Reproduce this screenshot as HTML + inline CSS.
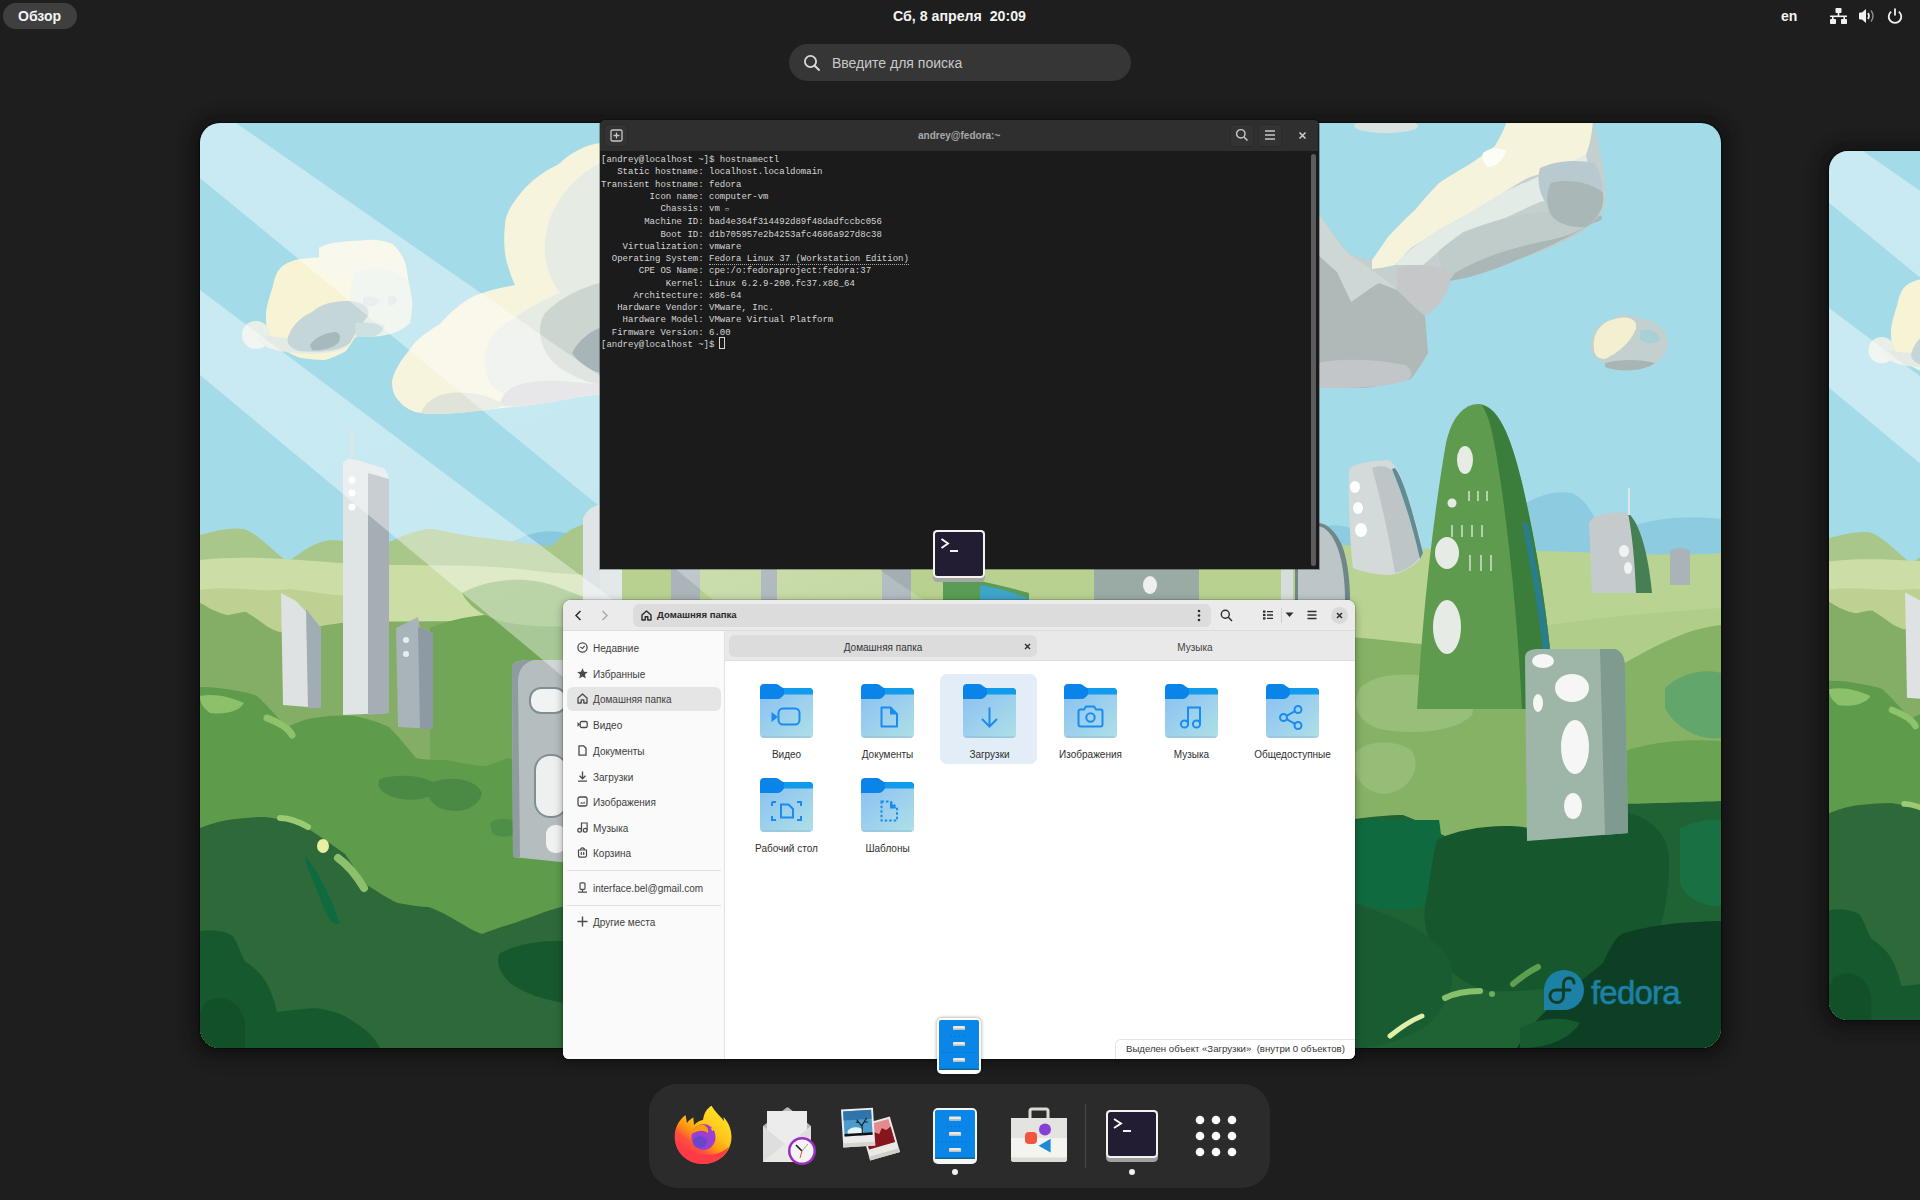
<!DOCTYPE html>
<html><head><meta charset="utf-8">
<style>
*{margin:0;padding:0;box-sizing:border-box}
html,body{width:1920px;height:1200px;overflow:hidden;background:#1e1e1e;font-family:"Liberation Sans",sans-serif;color:#fff}
.abs{position:absolute}
svg{display:block}
#pill{left:3px;top:3px;width:74px;height:26px;border-radius:13px;background:#3f3f3f}
.ttxt{font-weight:bold;font-size:14px;color:#f4f4f4;white-space:nowrap;line-height:16px}
#search{left:789px;top:44px;width:342px;height:37px;border-radius:19px;background:#363636}
#ws{left:200px;top:123px;width:1521px;height:925px;border-radius:20px;overflow:hidden;box-shadow:0 0 0 1px #0c0c0c,0 2px 2px 3px rgba(0,0,0,.15),0 1px 3px 10px rgba(0,0,0,.1),0 2px 6px 20px rgba(0,0,0,.1)}
#ws2{left:1829px;top:151px;width:1429px;height:869px;border-radius:19px;overflow:hidden;box-shadow:0 0 0 1px #0c0c0c,0 2px 2px 3px rgba(0,0,0,.15),0 1px 3px 10px rgba(0,0,0,.1),0 2px 6px 20px rgba(0,0,0,.1)}
#term{left:600px;top:120px;width:719px;height:449px;background:#1b1b1b;border-radius:5px 5px 0 0;overflow:hidden;box-shadow:0 0 0 1px rgba(0,0,0,.3)}
#termhdr{left:0;top:0;width:718px;height:31px;background:#2f2f2f}
.tbtn{top:4px;width:24px;height:23px;border-radius:5px;background:#333;box-shadow:inset 0 0 0 1px #2a2a2a}
#termtxt{left:1px;top:34px;font-family:"Liberation Mono",monospace;font-size:9px;line-height:12.27px;color:#d6d6d6;white-space:pre}
#fm{left:563px;top:600px;width:792px;height:459px;background:#fff;border-radius:8px 8px 6px 6px;overflow:hidden;box-shadow:0 0 0 1px rgba(0,0,0,.12),0 2px 8px rgba(0,0,0,.35)}
#fmhdr{left:0;top:0;width:792px;height:31px;background:#ebebeb;border-bottom:1px solid #dcdcdc}
#side{left:0;top:31px;width:162px;height:428px;background:#fafafa;border-right:1px solid #e2e2e2}
.si{left:14px;height:16px;font-size:10px;line-height:16px;color:#404040;white-space:nowrap}
.si svg{position:absolute;left:0;top:3px}
.si span{position:absolute;left:16px;top:1.5px}
#tabs{left:162px;top:31px;width:630px;height:30px;background:#e9e9e9;border-bottom:1px solid #dedede}
.lbl{font-size:10px;color:#2f2f2f;text-align:center;width:100px;white-space:nowrap;line-height:12px}
.fold{width:53px;height:54px}
#dock{left:649px;top:1084px;width:621px;height:104px;border-radius:28px;background:#2b2b2b}
</style></head><body>
<svg width="0" height="0" style="position:absolute">
<defs>
<linearGradient id="rayfade" x1="0" y1="0" x2="0.45" y2="1">
  <stop offset="0" stop-color="#fff" stop-opacity="0.42"/>
  <stop offset="0.55" stop-color="#fff" stop-opacity="0.38"/>
  <stop offset="0.85" stop-color="#fff" stop-opacity="0.12"/>
  <stop offset="1" stop-color="#fff" stop-opacity="0"/>
</linearGradient>
<symbol id="wp" viewBox="0 0 1521 925" preserveAspectRatio="none">
  <!-- sky -->
  <rect width="1521" height="925" fill="#a3dbe9"/>
  <!-- clouds: left small -->
  <g>
    <path d="M72.5 164.5 C75 152 78 147 82.5 143 C88 139 94 137 100 136 C108 135 114 135 120 134.5 C120 128 121 126 121 124.5 C126 121 131 120 136 119.5 C143 120 149 121 155 121 C160 119 164 117 167.5 117 C176 116 185 118 192.5 121 C199 127 203 133 205 139.5 C207 147 208 155 209 162 C211 169 212 176 212.5 183 C210 189 207 194 202.5 197 C197 199 191 201 185 202 C183 206 181 209 180 212 C174 213 167 213 161 213 C159 214 157 214 155 214.5 C152 219 149 224 146 228 C139 232 132 235 125 237 C116 237 107 236 99 234.5 C93 232 87 229 82.5 226 C77 221 71 215 67.5 209.5 C66 203 66 196 66 189.5 C67 181 70 172 72.5 164.5Z" fill="#f7f4d6"/>
    <path d="M119 124.5 C130 119 150 118 167.5 117 C185 118 198 126 205 139.5 C207 147 207 152 206 154 C190 150 170 148 150 150 C140 152 125 150 119 140Z" fill="#f4f3e2"/>
    <path d="M155 150 C170 143 195 143 209 160 C212 176 213 190 210 200 C200 210 185 214 165 214 C158 205 152 190 150 175 C150 165 152 156 155 150Z" fill="#e8f0e8"/>
    <path d="M163 175 C170 172 178 174 180 179 C176 184 168 185 163 181Z M188 175 C193 171 197 173 197 178 C195 183 190 184 188 180Z" fill="#dde3e8"/>
    <circle cx="56" cy="212" r="14" fill="#e7efe8"/>
    <path d="M56 212 C80 214 120 218 149 222 C140 230 120 232 95 230 C75 228 60 225 56 212Z" fill="#e3ebe4"/>
    <path d="M87.5 216 C90 205 100 194 112 189 C125 178 145 176 160 180 C168 183 170 188 168 193 C162 200 156 210 150 220 C140 228 120 230 100 228 C92 226 87 222 87.5 216Z" fill="#c5d6d8"/>
    <path d="M110 222 C115 214 125 210 135 209 C141 210 141 216 138 220 C132 226 120 228 112 227Z" fill="#a6b9bc"/>
    <path d="M155 200 C170 198 180 202 185 202 C183 208 180 212 170 214 L156 214Z" fill="#cde0e2"/>
  </g>
  <!-- big left cloud (behind terminal) -->
  <g>
    <path d="M400 20 C385 22 370 30 359 41 C340 50 330 60 325 65 C312 80 305 92 305 102 C303 120 305 135 308 143 C310 150 313 158 315 162 C300 165 285 168 272 174 C258 182 248 192 240 201 C225 210 215 218 211 225 C200 238 193 250 192 259 C192 268 195 274 199 278 C205 285 212 289 221 290 C240 292 260 290 277 288 C295 286 310 284 325 283 C350 280 375 274 400 271 L700 300 L1118 264 L1118 92 L700 40Z" fill="#f6f4dd"/>
    <path d="M400 40 C380 50 360 70 350 95 C340 125 345 150 360 170 C340 178 320 190 300 205 C285 218 280 240 290 260 C300 275 330 280 360 276 L400 271Z" fill="#e6ece4"/>
    <path d="M400 160 C380 165 360 175 345 190 C335 205 340 230 360 245 C375 255 390 260 400 262Z" fill="#ccd5cf"/>
    <path d="M400 205 C390 208 378 218 372 230 C380 242 392 248 400 250Z" fill="#a8b5b8"/>
    <path d="M318 262 C340 255 370 258 400 262 L400 271 C375 274 350 280 325 283 C310 284 300 284 300 280 C302 272 308 266 318 262Z" fill="#d8d7dc"/>
    <path d="M221 290 C240 292 260 290 277 288 C290 287 300 285 305 282 C290 272 270 268 250 270 C235 272 225 280 221 290Z" fill="#dfe3d8"/>
  </g>
  <!-- right cloud -->
  <g>
    <path d="M1118 90 C1123 97 1128 104 1132 109 C1138 116 1143 124 1148 130 C1156 134 1164 136 1172 137 C1178 129 1183 121 1188 114 C1197 104 1206 95 1216 86 C1223 77 1231 68 1239 60 C1249 53 1260 47 1270 41 C1279 35 1287 29 1295 23 C1299 16 1303 9 1307 -2 L1393 -2 C1397 13 1400 28 1403 44 C1405 57 1406 70 1405 83 C1402 90 1398 95 1393 100 C1380 108 1366 116 1351 123 C1336 130 1320 136 1305 142 C1297 145 1289 148 1281 151 C1270 153 1259 156 1249 158 C1240 170 1232 181 1225 193 C1226 205 1227 218 1228 230 C1223 239 1217 248 1211 256 C1195 260 1180 263 1165 265 L1118 265Z" fill="#c5cfce"/>
    <path d="M1172 137 C1178 129 1183 121 1188 114 C1197 104 1206 95 1216 86 C1223 77 1231 68 1239 60 C1249 53 1260 47 1270 41 C1279 35 1287 29 1295 23 C1299 16 1303 9 1307 -2 L1393 -2 C1392 10 1390 22 1386 32 C1375 38 1363 43 1351 48 C1343 50 1335 52 1328 55 C1318 60 1309 66 1300 72 C1290 78 1280 84 1270 90 C1260 96 1249 101 1239 107 C1230 113 1220 119 1211 125 C1205 131 1200 137 1195 142 C1187 144 1180 145 1172 146Z" fill="#f6f3dc"/>
    <path d="M1283 30 C1290 24 1300 24 1306 28 C1303 38 1295 44 1288 44 C1283 40 1281 35 1283 30Z" fill="#fdfdf8"/>
    <path d="M1195 142 C1205 130 1220 118 1239 107 C1260 96 1285 80 1310 66 C1335 55 1360 45 1386 32 C1390 45 1387 58 1379 67 C1366 72 1353 76 1340 79 C1328 84 1316 90 1305 95 C1290 99 1276 104 1263 109 C1255 115 1247 121 1239 128 C1233 133 1228 138 1223 142Z" fill="#e3ebe6"/>
    <path d="M1340 45 C1355 38 1375 36 1395 40 C1403 55 1405 72 1400 88 C1385 95 1365 92 1350 85 C1340 75 1336 58 1340 45Z" fill="#b8cad0"/>
    <path d="M1239 128 C1255 112 1285 100 1320 92 C1350 86 1375 88 1393 100 C1375 115 1350 126 1320 136 C1295 145 1270 152 1249 158 C1242 148 1238 138 1239 128Z" fill="#c0ccca"/>
    <path d="M1255 150 C1280 135 1310 125 1345 118 C1365 114 1385 108 1400 92 C1404 95 1402 98 1393 100 C1370 114 1340 128 1305 142 C1285 150 1265 156 1249 158Z" fill="#aab7b6"/>
    <path d="M1351 60 C1370 55 1392 60 1403 70 C1405 85 1398 96 1385 104 C1370 105 1355 100 1350 90 C1346 80 1346 70 1351 60Z" fill="#a9b7b7"/>
    <path d="M1118 90 C1128 104 1140 122 1148 130 C1160 140 1180 150 1197 167 C1180 175 1160 180 1151 179 C1140 165 1130 150 1118 132Z" fill="#cfd7d6"/>
    <path d="M1118 132 C1125 138 1131 144 1137 149 C1142 160 1147 170 1151 179 C1160 173 1170 165 1179 160 C1185 162 1191 165 1197 167 C1207 175 1217 184 1225 193 C1226 205 1227 218 1228 230 C1223 239 1217 248 1211 256 C1195 260 1180 263 1165 265 L1118 265Z" fill="#aeb9b8"/>
    <path d="M1197 146 C1210 140 1235 140 1251 150 C1250 165 1245 180 1225 193 C1215 185 1205 175 1197 167Z" fill="#c5c7c9"/>
    <path d="M1118 240 C1140 235 1175 236 1205 242 C1215 248 1212 256 1205 258 C1190 262 1170 264 1150 265 L1118 265Z" fill="#c3c6c8"/>
  </g>
  <!-- small right cloud -->
  <path d="M1391 228 C1388 212 1398 200 1410 198 C1418 190 1432 190 1440 196 C1452 195 1466 205 1468 218 C1468 232 1458 242 1445 244 C1430 250 1405 250 1391 228Z" fill="#c4d0cf"/>
  <path d="M1394 226 C1392 210 1402 198 1415 196 C1428 192 1438 196 1436 206 C1430 220 1418 230 1405 236 C1398 236 1394 232 1394 226Z" fill="#f3f0d2"/>
  <path d="M1440 208 C1448 204 1458 208 1460 216 C1455 222 1445 222 1440 216Z" fill="#a9d0d6"/>
  <path d="M1405 240 C1420 236 1440 236 1455 240 C1445 248 1420 250 1405 244Z" fill="#a9b5b5"/>
  <ellipse cx="1186" cy="3" rx="32" ry="7" fill="#d9e2de"/>
  <!-- distant blue hills -->
  <path d="M1100 420 C1110 405 1130 398 1150 405 C1165 410 1170 420 1172 430 L1100 430Z" fill="#8ccbe0"/><path d="M1300 410 C1315 380 1345 366 1372 370 C1388 378 1396 395 1400 410 L1400 440 L1300 440Z" fill="#8ccbe0"/><path d="M1420 408 C1450 394 1490 392 1521 396 L1521 440 L1420 440Z" fill="#8ccbe0"/>
  <path d="M310 420 C330 408 355 405 370 412 L380 430 L310 430Z" fill="#88c9e0"/>
  <!-- hills left -->
  <path d="M0 412 C15 408 30 404 44 406 C60 412 75 430 88 439 C100 430 115 418 132 417 C150 418 170 420 189 419 C205 412 220 405 233 406 C255 410 270 414 286 415 C310 418 330 422 352 423 C360 415 366 410 372 406 C385 400 392 398 400 397 L400 925 L0 925Z" fill="#a9c78a"/>
  <path d="M0 437 C40 432 90 436 140 440 C200 444 260 440 320 446 C350 450 380 452 400 452 L400 925 L0 925Z" fill="#cbdea5"/>
  <path d="M0 467 C30 462 60 470 90 466 C120 470 150 475 180 474 L180 925 L0 925Z" fill="#bdd292"/>
  <path d="M0 480 C5 482 10 486 13 487 C20 490 25 492 29 492 C35 491 40 489 46 489 C55 494 62 500 68 504 C72 506 76 508 79 509 C100 508 130 500 160 498 C200 500 250 496 300 500 C340 505 370 505 400 505 L400 925 L0 925Z" fill="#84ad66"/>
  <path d="M230 505 C260 492 300 488 340 494 C370 498 390 500 400 500 L400 670 L230 670Z" fill="#72a657"/>
  <path d="M262 470 C290 455 330 452 360 465 L400 480 L400 500 C370 505 330 505 300 498 C280 492 268 482 262 470Z" fill="#8fb870"/>
  <!-- region D strip (between windows) -->
  <path d="M400 446 L1118 446 L1118 480 L400 480Z" fill="#b8d190"/>
  <path d="M743 452 C770 455 800 462 829 470 L829 480 L743 480Z" fill="#5a9c55"/>
  <path d="M780 462 C800 465 815 470 829 476 L829 480 L780 480Z" fill="#3fa4c9"/>
  <rect x="390" y="440" width="32" height="40" rx="4" fill="#e3e8e8"/>
  <rect x="471" y="446" width="29" height="34" fill="#aab4b9"/>
  <rect x="561" y="446" width="16" height="34" fill="#9aa6ad"/>
  <rect x="682" y="446" width="29" height="34" fill="#a3aeb3"/>
  <rect x="894" y="446" width="105" height="34" fill="#9aaba5"/>
  <ellipse cx="950" cy="462" rx="7" ry="9" fill="#eef0ef"/>
  <rect x="1081" y="446" width="12" height="34" fill="#d7dcdc"/>
  <!-- right side light -->
  <path d="M1118 420 C1200 428 1300 425 1400 430 C1450 432 1500 432 1521 430 L1521 925 L1118 925Z" fill="#b9d492"/>
  <path d="M1318 508 C1380 495 1450 490 1521 485 L1521 520 C1470 540 1430 555 1400 560 C1370 545 1340 530 1318 520Z" fill="#b1cd8a"/><path d="M1465 545 C1485 530 1505 518 1521 510 L1521 516 C1505 525 1488 537 1470 549Z" fill="#d8e6a8"/>
  <path d="M1118 514 C1160 512 1200 520 1245 523 C1300 530 1350 535 1425 540 C1460 520 1490 505 1521 502 L1521 925 L1118 925Z" fill="#86b266"/>
  <path d="M1160 565 C1175 550 1210 548 1240 556 C1265 560 1278 575 1272 592 C1255 610 1210 612 1180 606 C1160 600 1150 585 1160 565Z" fill="#98bf7a"/>
  <path d="M1155 630 C1165 618 1195 615 1212 628 C1222 645 1210 668 1185 671 C1165 670 1150 655 1155 630Z" fill="#96bd78"/>
  <path d="M1465 565 C1480 550 1505 545 1521 550 L1521 615 C1500 618 1475 605 1465 585Z" fill="#62a66c"/><path d="M1400 640 C1430 620 1480 615 1521 618 L1521 680 L1425 681 C1410 670 1402 655 1400 640Z" fill="#6aa352"/>
  <!-- bush hills left -->
  <path d="M0 564 C10 564 20 565 26 566 C40 568 50 570 57 573 C70 585 80 598 88 604 C95 600 105 596 114 595 C130 592 145 592 154 593 C170 596 180 600 189 604 C200 615 210 628 216 635 C225 637 235 637 246 637 C260 640 275 643 286 643 C295 640 302 637 308 635 C330 640 370 645 400 650 L400 925 L0 925Z" fill="#5e9c4b"/>
  <path d="M0 573 C15 570 30 574 44 580 C40 588 25 592 10 590 C5 586 0 582 0 573Z" fill="#8cc06a"/>
  <path d="M180 656 C200 650 230 652 240 665 C232 678 205 680 188 672 C180 668 176 662 180 656Z" fill="#4a8a45"/>
  <path d="M230 660 C250 652 275 655 282 670 C278 688 255 692 238 684 C228 678 224 668 230 660Z" fill="#4a8a45"/>
  <path d="M290 700 C300 693 315 695 320 705 C315 715 300 716 292 710Z" fill="#4e8f48"/>
  <!-- dark foliage left -->
  <path d="M0 705 C12 700 24 697 35 696 C45 695 55 694 66 694 C80 696 92 699 101 701 C115 710 130 720 145 731 C155 745 160 755 167 762 C180 770 190 777 198 780 C210 782 220 784 229 784 C245 790 255 797 264 802 C270 806 276 809 282 811 C290 808 300 804 308 802 C330 795 345 788 361 784 C380 786 390 788 400 789 L400 925 L0 925Z" fill="#2e6a39"/>
  <path d="M0 808 C12 806 25 808 33 813 C40 825 42 835 46 839 C55 845 62 852 66 859 C72 870 75 880 77 889 C85 888 100 886 115 885 C130 887 140 890 148 895 C160 902 170 910 175 917 L180 925 L0 925Z" fill="#17592f"/>
  <path d="M5 880 C20 870 40 875 45 900 L45 925 L0 925 L0 890Z" fill="#12502a"/><path d="M105 732 C115 745 130 770 140 800 C132 805 125 790 118 770 C112 755 105 742 105 732Z" fill="#0f6a40"/>
  <path d="M300 830 C330 815 370 815 400 825 L400 880 C370 885 330 875 310 860 C300 850 295 840 300 830Z" fill="#17592f"/>
  <!-- dark foliage right -->
  <path d="M1118 700 C1130 697 1145 696 1155 696 C1170 694 1190 692 1203 692 C1220 698 1235 708 1245 713 C1260 710 1275 706 1287 705 C1300 708 1315 712 1325 713 C1360 705 1400 688 1422 681 C1460 680 1500 679 1521 678 L1521 925 L1118 925Z" fill="#1f6234"/>
  <path d="M1155 697 L1239 697 C1245 730 1240 760 1225 783 C1200 790 1170 785 1155 780Z" fill="#106a3f"/>
  <path d="M1237 717 C1260 705 1300 700 1330 705 L1430 690 C1460 700 1470 720 1469 740 C1469 780 1460 820 1440 840 C1400 860 1340 870 1290 868 C1250 860 1220 820 1225 783 C1230 760 1232 735 1237 717Z" fill="#16572d"/>
  <path d="M1480 705 C1495 698 1510 696 1521 697 L1521 783 C1505 785 1485 775 1480 760Z" fill="#187043"/>
  <path d="M1155 780 C1180 790 1220 800 1245 830 C1260 850 1250 880 1230 900 C1210 915 1180 925 1155 925Z" fill="#1a5c31"/>
  <path d="M1403 840 C1410 825 1415 815 1422 811 C1440 805 1460 802 1479 800 C1495 799 1510 798 1521 798 L1521 925 L1317 925 C1325 910 1335 898 1346 888 C1365 870 1385 855 1403 840Z" fill="#0c3f24"/>
  <path d="M1320 905 C1340 895 1360 893 1380 900 C1370 915 1350 925 1320 925Z" fill="#185a30"/>
  <!-- bright highlight strokes -->
  <path d="M67 595 C75 598 88 604 92 612" stroke="#8fc36b" stroke-width="7" fill="none" stroke-linecap="round"/>
  <path d="M80 695 C88 695 100 699 108 704" stroke="#9bca73" stroke-width="6" fill="none" stroke-linecap="round"/>
  <ellipse cx="123" cy="723" rx="6" ry="7" fill="#e9eea0"/>
  <path d="M138 735 C148 742 158 755 164 765" stroke="#8cc06a" stroke-width="8" fill="none" stroke-linecap="round"/>
  <path d="M1313 861 C1320 855 1330 848 1338 844" stroke="#5f9e4e" stroke-width="6" fill="none" stroke-linecap="round"/>
  <path d="M1245 875 C1255 870 1268 868 1280 868" stroke="#86c06a" stroke-width="6" fill="none" stroke-linecap="round"/>
  <circle cx="1292" cy="871" r="3" fill="#6fae5c"/>
  <path d="M1190 913 C1200 905 1212 897 1222 893" stroke="#e0efa8" stroke-width="5" fill="none" stroke-linecap="round"/>
  <!-- buildings left -->
  <path d="M152 306 L152 340" stroke="#c9d1d3" stroke-width="2.5"/>
  <path d="M143 342 C143 336 150 335 160 338 L183 345 C188 348 189 355 189 360 L189 590 L143 592Z" fill="#dfe4e4"/>
  <path d="M168 350 L189 356 L189 590 L168 592Z" fill="#a5aeb5"/>
  <circle cx="152" cy="357" r="3.5" fill="#fff"/><circle cx="152" cy="370" r="3.5" fill="#fff"/><circle cx="152" cy="384" r="3.5" fill="#fff"/>
  <path d="M81 470 L96 478 L121 505 L121 585 L83 582Z" fill="#dfe2e2"/>
  <path d="M106 486 L121 505 L121 585 L108 585Z" fill="#a2acb3"/>
  <path d="M196 505 L218 494 L220 505 L233 510 L233 606 L198 604Z" fill="#a9b3ba"/>
  <path d="M218 504 L233 510 L233 606 L220 606Z" fill="#8e9aa3"/>
  <circle cx="206" cy="517" r="3" fill="#e6eef0"/><circle cx="206" cy="531" r="3" fill="#e6eef0"/>
  <path d="M312 545 C312 539 318 537 332 537 L370 537 L370 740 L313 734Z" fill="#b5bdbf"/>
  <path d="M312 545 C312 539 318 537 332 537 L334 537 C322 540 318 548 318 560 L320 734 L313 734Z" fill="#8e9ca0"/>
  <rect x="329" y="564" width="38" height="27" rx="12" fill="#7f8f93"/>
  <rect x="331" y="566" width="34" height="23" rx="10" fill="#f1f2f2"/>
  <rect x="334" y="631" width="34" height="64" rx="16" fill="#7f8f93"/>
  <rect x="336" y="633" width="30" height="60" rx="14" fill="#eef0f0"/>
  <rect x="346" y="702" width="20" height="28" rx="9" fill="#f0f1f1"/>
  <path d="M383 395 C388 385 395 382 400 382 L400 477 L383 477Z" fill="#dfe5e6"/>
  <!-- buildings right -->
  <path d="M1095 430 C1100 410 1110 400 1118 400 C1128 400 1137 410 1143 425 C1148 440 1150 460 1150 477 L1095 477Z" fill="#6f8789"/><path d="M1098 432 C1103 413 1111 403 1118 403 C1126 404 1133 412 1138 426 C1143 440 1145 460 1145 477 L1098 477Z" fill="#bcc6c8"/>
  <path d="M1149 348 C1150 342 1160 339 1188 337 C1195 340 1200 350 1205 365 C1212 385 1220 410 1223 430 C1220 440 1205 450 1190 452 C1175 452 1160 448 1153 445 C1150 420 1148 380 1149 348Z" fill="#d4d9d9"/>
  <path d="M1172 345 C1185 340 1195 345 1202 362 C1210 385 1218 410 1221 432 C1215 442 1205 448 1195 450 C1190 420 1182 380 1172 345Z" fill="#bdc5c7"/><path d="M1195 345 C1203 355 1212 385 1223 430 L1220 436 C1212 400 1202 370 1192 346Z" fill="#5f8d92"/>
  <ellipse cx="1155" cy="364" rx="5" ry="6" fill="#fff"/><ellipse cx="1158" cy="385" rx="5" ry="6" fill="#fff"/><ellipse cx="1161" cy="407" rx="6" ry="7" fill="#fff"/>
  <path d="M1217 586 C1222 500 1232 400 1246 320 C1252 292 1266 280 1280 281 C1298 284 1310 310 1322 360 C1336 420 1350 500 1355 586Z" fill="#5f9b4f"/>
  <path d="M1282 282 C1298 286 1310 310 1322 360 C1336 420 1350 500 1355 586 L1322 586 C1318 500 1308 400 1296 330 C1292 305 1288 292 1282 282Z" fill="#3b7d3a"/>
  <path d="M1328 400 C1340 460 1352 520 1355 586 L1348 586 C1344 520 1334 460 1322 400Z" fill="#2a7d8a"/>
  <ellipse cx="1265" cy="337" rx="8" ry="14" fill="#e6ebe5"/>
  <circle cx="1252" cy="380" r="4.5" fill="#e6ebe5"/>
  <ellipse cx="1247" cy="430" rx="12" ry="16" fill="#e6ebe5"/>
  <ellipse cx="1247" cy="504" rx="14" ry="27" fill="#e6ebe5"/>
  <path d="M1269 368 L1269 378 M1278 368 L1278 378 M1287 368 L1287 378 M1252 402 L1252 414 M1262 402 L1262 414 M1272 402 L1272 414 M1282 402 L1282 414 M1270 432 L1270 448 M1281 432 L1281 448 M1291 432 L1291 448" stroke="#b5d0ae" stroke-width="2"/>
  <path d="M1389 400 C1392 392 1410 388 1428 390 C1440 400 1448 430 1452 470 L1392 470Z" fill="#c5cbcc"/>
  <path d="M1428 390 C1440 400 1448 430 1452 470 L1436 470 C1435 440 1432 410 1428 390Z" fill="#457f53"/>
  <ellipse cx="1424" cy="428" rx="5" ry="6" fill="#f1f3f3"/><ellipse cx="1428" cy="445" rx="4" ry="6" fill="#f1f3f3"/>
  <path d="M1429 365 L1429 392" stroke="#dfe5e6" stroke-width="2"/>
  <path d="M1470 428 C1475 424 1485 424 1490 428 L1490 462 L1470 462Z" fill="#a9b3b8"/>
  <path d="M1325 535 C1325 528 1330 526 1340 526 L1415 526 C1422 528 1425 535 1425 545 L1428 710 L1327 718Z" fill="#9eb6a8"/>
  <path d="M1400 526 L1415 526 C1422 528 1425 535 1425 545 L1428 710 L1405 712Z" fill="#7f9a8e"/>
  <ellipse cx="1343" cy="538" rx="11" ry="7" fill="#f5f6f5"/>
  <ellipse cx="1372" cy="565" rx="17" ry="14" fill="#f5f6f5"/>
  <ellipse cx="1338" cy="580" rx="5" ry="9" fill="#f5f6f5"/>
  <ellipse cx="1375" cy="624" rx="14" ry="27" fill="#f5f6f5"/>
  <ellipse cx="1373" cy="683" rx="9" ry="13" fill="#f5f6f5"/>
  <!-- foliage in front of gray-green tower -->
  
  <!-- rays -->
  <path d="M0 -25 L900 600 L900 795 L0 55Z" fill="url(#rayfade)"/>
  <path d="M0 167 L900 842 L900 1000 L0 252Z" fill="url(#rayfade)"/>
  <!-- fedora logo -->
  <g fill="#1d80a5">
    <path d="M1364 847 a20 20 0 1 1 0 40 l-20 0 l0 -20 a20 20 0 0 1 20 -20Z"/>
  </g>
  <path d="M1370 867 L1356 867 C1351.5 867 1350 870.5 1350 873 C1350 877 1353 879.5 1357 879.5 C1361 879.5 1363.5 876.5 1363.5 872 L1363.5 861 C1363.5 857.5 1366 855 1369 855 C1372 855 1374 857 1374 860" stroke="#0f3f25" stroke-width="3" fill="none" stroke-linecap="round"/>
  <text x="1391" y="881" font-family="Liberation Sans" font-size="33" fill="#1d80a5" stroke="#1d80a5" stroke-width="0.6" letter-spacing="-0.8">fedora</text>
</symbol>
</defs>
</svg>

<svg width="0" height="0" style="position:absolute">
<defs>
<linearGradient id="fgrad" x1="0" y1="0" x2="1" y2="1">
  <stop offset="0" stop-color="#8bc1f3"/>
  <stop offset="1" stop-color="#aee0e6"/>
</linearGradient>
<symbol id="folder" viewBox="0 0 53 54">
  <path d="M0 4 Q0 0 4 0 L16 0 Q18 0 20 2 L23 4 L49 4 Q53 4 53 8 L53 24 L0 24Z" fill="#0a84e8"/>
  <path d="M24 4 L49 4 Q53 4 53 8 L53 24 L24 24Z" fill="#129bec"/>
  <path d="M0 15 L18 15 Q20 15 22 13 L24 10.5 L53 10.5 L53 49.5 Q53 53.5 49 53.5 L4 53.5 Q0 53.5 0 49.5Z" fill="url(#fgrad)"/>
  <path d="M0 52.5 L53 52.5 L53 50 Q53 54 49 54 L4 54 Q0 54 0 50Z" fill="#7eb2cf" opacity=".6"/>
</symbol>
</defs>
</svg>

<!-- top bar -->
<div id="pill" class="abs"></div>
<div class="abs ttxt" style="left:18px;top:8px">Обзор</div>
<div class="abs ttxt" style="left:893px;top:7.8px;font-size:14.2px">Сб, 8 апреля&nbsp; 20:09</div>
<div class="abs ttxt" style="left:1781px;top:8px">en</div>
<!-- network -->
<svg class="abs" style="left:1830px;top:8px" width="17" height="16" viewBox="0 0 17 16">
  <rect x="5.5" y="0" width="6" height="5" rx="0.8" fill="#f2f2f2"/>
  <rect x="7.7" y="5" width="1.6" height="3" fill="#f2f2f2"/>
  <rect x="0" y="7.5" width="17" height="1.6" fill="#f2f2f2"/>
  <rect x="2" y="9" width="1.6" height="2" fill="#f2f2f2"/>
  <rect x="13.4" y="9" width="1.6" height="2" fill="#f2f2f2"/>
  <rect x="0" y="11" width="6" height="5" rx="0.8" fill="#f2f2f2"/>
  <rect x="11" y="11" width="6" height="5" rx="0.8" fill="#f2f2f2"/>
</svg>
<!-- volume -->
<svg class="abs" style="left:1858px;top:8px" width="18" height="16" viewBox="0 0 18 16">
  <path d="M1 5.5 Q1 4.5 2 4.5 L4 4.5 L8 1 L8 15 L4 11.5 L2 11.5 Q1 11.5 1 10.5Z" fill="#f2f2f2"/>
  <path d="M10 5 Q12 8 10 11" stroke="#f2f2f2" stroke-width="1.7" fill="none"/>
  <path d="M13 2.5 Q17 8 13 13.5" stroke="#8a8a8a" stroke-width="1.5" fill="none"/>
</svg>
<!-- power -->
<svg class="abs" style="left:1887px;top:8px" width="16" height="16" viewBox="0 0 16 16">
  <path d="M4.2 3.6 A6.3 6.3 0 1 0 11.8 3.6" stroke="#f2f2f2" stroke-width="1.8" fill="none"/>
  <path d="M8 0.5 L8 7.5" stroke="#f2f2f2" stroke-width="1.8"/>
</svg>

<!-- search -->
<div id="search" class="abs"></div>
<svg class="abs" style="left:803px;top:54px" width="18" height="18" viewBox="0 0 18 18">
  <circle cx="7.5" cy="7.5" r="5.6" stroke="#dadada" stroke-width="1.8" fill="none"/>
  <path d="M11.5 11.5 L16 16" stroke="#dadada" stroke-width="1.9" stroke-linecap="round"/>
</svg>
<div class="abs" style="left:832px;top:55px;font-size:14px;line-height:17px;color:#c9c9c9;white-space:nowrap">Введите для поиска</div>

<!-- workspaces -->
<div id="ws" class="abs"><svg width="1521" height="925"><use href="#wp"/></svg></div>
<div id="ws2" class="abs"><svg width="1429" height="869"><use href="#wp"/></svg></div>

<!-- terminal -->
<div id="term" class="abs">
  <div id="termhdr" class="abs"></div>
  <div class="abs tbtn" style="left:4px"></div>
  <svg class="abs" style="left:10px;top:9px" width="13" height="13" viewBox="0 0 13 13">
    <rect x="1" y="1" width="11" height="11" rx="1.5" stroke="#c8c8c8" stroke-width="1.3" fill="none"/>
    <path d="M6.5 3.5 L6.5 9.5 M3.5 6.5 L9.5 6.5" stroke="#c8c8c8" stroke-width="1.3"/>
  </svg>
  <div class="abs" style="left:318px;top:9px;font-size:10px;font-weight:bold;color:#a9a9a9;line-height:13px;white-space:nowrap">andrey@fedora:~</div>
  <div class="abs tbtn" style="left:630px"></div>
  <svg class="abs" style="left:635px;top:8px" width="14" height="14" viewBox="0 0 14 14">
    <circle cx="5.8" cy="5.8" r="4.2" stroke="#c8c8c8" stroke-width="1.4" fill="none"/>
    <path d="M9 9 L12.5 12.5" stroke="#c8c8c8" stroke-width="1.5"/>
  </svg>
  <div class="abs tbtn" style="left:658px"></div>
  <svg class="abs" style="left:664px;top:9px" width="12" height="12" viewBox="0 0 12 12">
    <path d="M1 2 L11 2 M1 6 L11 6 M1 10 L11 10" stroke="#c8c8c8" stroke-width="1.4"/>
  </svg>
  <svg class="abs" style="left:698px;top:11px" width="9" height="9" viewBox="0 0 9 9">
    <path d="M1.5 1.5 L7.5 7.5 M7.5 1.5 L1.5 7.5" stroke="#d0d0d0" stroke-width="1.5"/>
  </svg>
  <div id="termtxt" class="abs">[andrey@localhost ~]$ hostnamectl
   Static hostname: localhost.localdomain
Transient hostname: fedora
         Icon name: computer-vm
           Chassis: vm <span style="font-size:6px">▭</span>
        Machine ID: bad4e364f314492d89f48dadfccbc056
           Boot ID: d1b705957e2b4253afc4686a927d8c38
    Virtualization: vmware
  Operating System: <span style="border-bottom:1px dotted #aaa">Fedora Linux 37 (Workstation Edition)</span>
       CPE OS Name: cpe:/o:fedoraproject:fedora:37
            Kernel: Linux 6.2.9-200.fc37.x86_64
      Architecture: x86-64
   Hardware Vendor: VMware, Inc.
    Hardware Model: VMware Virtual Platform
  Firmware Version: 6.00
[andrey@localhost ~]$ </div>
  <div class="abs" style="left:119px;top:217px;width:6px;height:12px;border:1px solid #d6d6d6"></div>
  <div class="abs" style="left:711px;top:34px;width:5px;height:412px;border-radius:3px;background:#5c5c5c"></div>
</div>
<!-- terminal overlay icon -->
<svg class="abs" style="left:932px;top:529px" width="54" height="54" viewBox="0 0 54 54">
  <rect x="1" y="1" width="52" height="52" rx="4.5" fill="#a5a7a5"/>
  <rect x="1" y="1" width="52" height="48" rx="4.5" fill="#f3f3ef"/>
  <rect x="3" y="3" width="48" height="44" rx="2.5" fill="#231d33"/>
  <path d="M9.5 10 L16 14.5 L9.5 19" stroke="#fff" stroke-width="1.9" fill="none"/>
  <path d="M18 22 L26 22" stroke="#fff" stroke-width="1.9"/>
</svg>

<!-- file manager -->
<div id="fm" class="abs">
  <div id="fmhdr" class="abs"></div>
  <svg class="abs" style="left:11px;top:10px" width="8" height="11" viewBox="0 0 8 11"><path d="M6.5 1 L2 5.5 L6.5 10" stroke="#2e2e2e" stroke-width="1.5" fill="none"/></svg>
  <svg class="abs" style="left:38px;top:10px" width="8" height="11" viewBox="0 0 8 11"><path d="M1.5 1 L6 5.5 L1.5 10" stroke="#a8a8a8" stroke-width="1.4" fill="none"/></svg>
  <div class="abs" style="left:70px;top:4px;width:578px;height:23px;border-radius:6px;background:#dcdcdc"></div>
  <svg class="abs" style="left:78px;top:10px" width="11" height="11" viewBox="0 0 11 11"><path d="M1 10 L1 5 L5.5 1 L10 5 L10 10 L6.8 10 L6.8 6.8 L4.2 6.8 L4.2 10Z" stroke="#2a2a2a" stroke-width="1.4" fill="none" stroke-linejoin="round"/></svg>
  <div class="abs" style="left:94px;top:9px;font-size:9.6px;font-weight:bold;color:#2a2a2a;line-height:12px;white-space:nowrap">Домашняя папка</div>
  <svg class="abs" style="left:634px;top:9px" width="4" height="13" viewBox="0 0 4 13"><circle cx="2" cy="2" r="1.3" fill="#2e2e2e"/><circle cx="2" cy="6.5" r="1.3" fill="#2e2e2e"/><circle cx="2" cy="11" r="1.3" fill="#2e2e2e"/></svg>
  <svg class="abs" style="left:657px;top:9px" width="13" height="13" viewBox="0 0 13 13"><circle cx="5.3" cy="5.3" r="4" stroke="#2e2e2e" stroke-width="1.4" fill="none"/><path d="M8.3 8.3 L12 12" stroke="#2e2e2e" stroke-width="1.5"/></svg>
  <svg class="abs" style="left:700px;top:10px" width="11" height="10" viewBox="0 0 11 10"><rect x="0" y="0.5" width="2.5" height="2.2" fill="#2e2e2e"/><rect x="0" y="3.9" width="2.5" height="2.2" fill="#2e2e2e"/><rect x="0" y="7.3" width="2.5" height="2.2" fill="#2e2e2e"/><path d="M4 1.6 L10 1.6 M4 5 L10 5 M4 8.4 L10 8.4" stroke="#2e2e2e" stroke-width="1.3"/></svg>
  <div class="abs" style="left:718px;top:8px;width:1px;height:15px;background:#d0d0d0"></div>
  <svg class="abs" style="left:722px;top:12px" width="9" height="6" viewBox="0 0 9 6"><path d="M0.5 0.5 L8.5 0.5 L4.5 5Z" fill="#2e2e2e"/></svg>
  <svg class="abs" style="left:744px;top:10px" width="10" height="10" viewBox="0 0 10 10"><path d="M0.5 1.5 L9.5 1.5 M0.5 5 L9.5 5 M0.5 8.5 L9.5 8.5" stroke="#2e2e2e" stroke-width="1.4"/></svg>
  <div class="abs" style="left:768px;top:7px;width:17px;height:17px;border-radius:50%;background:#dadada"></div>
  <svg class="abs" style="left:773px;top:12px" width="7" height="7" viewBox="0 0 7 7"><path d="M1 1 L6 6 M6 1 L1 6" stroke="#2e2e2e" stroke-width="1.5"/></svg>

  <div id="side" class="abs">
    <div class="abs" style="left:4px;top:56px;width:154px;height:24px;border-radius:6px;background:#e5e5e5"></div>
  </div>
  <div id="tabs" class="abs">
    <div class="abs" style="left:4px;top:4px;width:308px;height:22px;border-radius:6px;background:#dcdcdc"></div>
    <div class="abs" style="left:4px;top:10.5px;width:308px;text-align:center;font-size:10px;line-height:12px;color:#333">Домашняя папка</div>
    <svg class="abs" style="left:299px;top:12px" width="7" height="7" viewBox="0 0 7 7"><path d="M1 1 L6 6 M6 1 L1 6" stroke="#2e2e2e" stroke-width="1.4"/></svg>
    <div class="abs" style="left:316px;top:10.5px;width:308px;text-align:center;font-size:10px;line-height:12px;color:#444">Музыка</div>
  </div>
  <!-- selected bg -->
  <div class="abs" style="left:377px;top:74px;width:97px;height:90px;border-radius:7px;background:#e2edf8"></div>
</div>
<div class="abs" style="left:563px;top:0;width:0;height:0">
<div class="abs si" style="top:639px"><svg width="11" height="11" viewBox="0 0 11 11"><circle cx="5.5" cy="5.5" r="4.6" stroke="#4a4a4a" stroke-width="1.3" fill="none"/><path d="M3.3 5 L5.5 6.5 L7.6 3.8" stroke="#4a4a4a" stroke-width="1.2" fill="none"/></svg><span>Недавние</span></div>
<div class="abs si" style="top:665px"><svg width="11" height="11" viewBox="0 0 11 11"><path d="M5.5 0.3 L7 3.8 L10.8 4.1 L7.9 6.6 L8.8 10.4 L5.5 8.4 L2.2 10.4 L3.1 6.6 L0.2 4.1 L4 3.8Z" fill="#4a4a4a"/></svg><span>Избранные</span></div>
<div class="abs si" style="top:690px"><svg width="11" height="11" viewBox="0 0 11 11"><path d="M1 10 L1 5 L5.5 1 L10 5 L10 10 L6.8 10 L6.8 6.8 L4.2 6.8 L4.2 10Z" stroke="#4a4a4a" stroke-width="1.3" fill="none" stroke-linejoin="round"/></svg><span>Домашняя папка</span></div>
<div class="abs si" style="top:716px"><svg width="11" height="11" viewBox="0 0 11 11"><path d="M0.5 3 L0.5 8 L3 5.5Z" fill="#4a4a4a"/><rect x="3.2" y="2.5" width="7" height="6" rx="1.6" stroke="#4a4a4a" stroke-width="1.3" fill="none"/></svg><span>Видео</span></div>
<div class="abs si" style="top:742px"><svg width="11" height="11" viewBox="0 0 11 11"><path d="M2 0.8 L6.5 0.8 L9 3.3 L9 10.2 L2 10.2Z" stroke="#4a4a4a" stroke-width="1.3" fill="none" stroke-linejoin="round"/></svg><span>Документы</span></div>
<div class="abs si" style="top:768px"><svg width="11" height="11" viewBox="0 0 11 11"><path d="M5.5 0.5 L5.5 7.5 M2.5 4.8 L5.5 7.8 L8.5 4.8 M1 10.2 L10 10.2" stroke="#4a4a4a" stroke-width="1.3" fill="none"/></svg><span>Загрузки</span></div>
<div class="abs si" style="top:793px"><svg width="11" height="11" viewBox="0 0 11 11"><rect x="1" y="1" width="9" height="9" rx="1.8" stroke="#4a4a4a" stroke-width="1.3" fill="none"/><path d="M3 7.5 L4.5 6 L6 7 L7.5 5.5 L8 7.5Z" fill="#4a4a4a"/></svg><span>Изображения</span></div>
<div class="abs si" style="top:819px"><svg width="11" height="11" viewBox="0 0 11 11"><circle cx="2.6" cy="8.3" r="1.9" stroke="#4a4a4a" stroke-width="1.2" fill="none"/><circle cx="8.2" cy="8.3" r="1.9" stroke="#4a4a4a" stroke-width="1.2" fill="none"/><path d="M4.5 8.3 L4.5 1 L10.1 1 L10.1 8.3" stroke="#4a4a4a" stroke-width="1.2" fill="none"/></svg><span>Музыка</span></div>
<div class="abs si" style="top:844px"><svg width="11" height="11" viewBox="0 0 11 11"><path d="M1.5 3 L9.5 3 L9.5 8.5 Q9.5 10.2 7.8 10.2 L3.2 10.2 Q1.5 10.2 1.5 8.5Z M3.5 3 Q3.5 0.8 5.5 0.8 Q7.5 0.8 7.5 3 M4.3 5 L4.3 8 M6.7 5 L6.7 8" stroke="#4a4a4a" stroke-width="1.2" fill="none"/></svg><span>Корзина</span></div>
<div class="abs" style="left:4px;top:870px;width:154px;height:1px;background:#e3e3e3"></div>
<div class="abs si" style="top:879px"><svg width="11" height="11" viewBox="0 0 11 11"><rect x="3" y="0.8" width="5" height="6.5" rx="1" stroke="#4a4a4a" stroke-width="1.2" fill="none"/><path d="M5.5 7.3 L5.5 9.5 M1 10.2 L10 10.2" stroke="#4a4a4a" stroke-width="1.2"/></svg><span>interface.bel@gmail.com</span></div>
<div class="abs" style="left:4px;top:905px;width:154px;height:1px;background:#e0e0e0"></div>
<div class="abs si" style="top:913px"><svg width="11" height="11" viewBox="0 0 11 11"><path d="M5.5 0.5 L5.5 10.5 M0.5 5.5 L10.5 5.5" stroke="#4a4a4a" stroke-width="1.4"/></svg><span>Другие места</span></div>
</div>

<svg class="abs fold" style="left:760px;top:684px" viewBox="0 0 53 54"><use href="#folder"/><path d="M11.5 28 L11.5 38 L18 33Z" fill="#1a8cf0"/><rect x="18.5" y="24.5" width="21" height="16" rx="4.5" stroke="#1a8cf0" stroke-width="2" fill="none"/></svg>
<div class="abs lbl" style="left:736.5px;top:748.5px">Видео</div>
<svg class="abs fold" style="left:861px;top:684px" viewBox="0 0 53 54"><use href="#folder"/><path d="M20.5 23.5 L29.5 23.5 L36 30 L36 42.5 L20.5 42.5Z" stroke="#1a8cf0" stroke-width="2" fill="none" stroke-linejoin="round"/><path d="M29 23.5 L29 30.5 L36 30.5" fill="#1a8cf0"/></svg>
<div class="abs lbl" style="left:837.5px;top:748.5px">Документы</div>
<svg class="abs fold" style="left:963px;top:684px" viewBox="0 0 53 54"><use href="#folder"/><path d="M26.5 23.5 L26.5 42 M19 35 L26.5 42.5 L34 35" stroke="#1a8cf0" stroke-width="2" fill="none"/></svg>
<div class="abs lbl" style="left:939.5px;top:748.5px">Загрузки</div>
<svg class="abs fold" style="left:1064px;top:684px" viewBox="0 0 53 54"><use href="#folder"/><path d="M14.5 27.5 Q14.5 25.5 16.5 25.5 L20 25.5 L22 22.5 L30 22.5 L32 25.5 L36.5 25.5 Q38.5 25.5 38.5 27.5 L38.5 40.5 Q38.5 42.5 36.5 42.5 L16.5 42.5 Q14.5 42.5 14.5 40.5Z" stroke="#1a8cf0" stroke-width="2" fill="none"/><circle cx="26.5" cy="33.5" r="4.2" stroke="#1a8cf0" stroke-width="2" fill="none"/></svg>
<div class="abs lbl" style="left:1040.5px;top:748.5px">Изображения</div>
<svg class="abs fold" style="left:1165px;top:684px" viewBox="0 0 53 54"><use href="#folder"/><circle cx="19.5" cy="40" r="3.6" stroke="#1a8cf0" stroke-width="2" fill="none"/><circle cx="31.5" cy="40" r="3.6" stroke="#1a8cf0" stroke-width="2" fill="none"/><path d="M23 40 L23 23.5 L35 23.5 L35 40" stroke="#1a8cf0" stroke-width="2" fill="none"/></svg>
<div class="abs lbl" style="left:1141.5px;top:748.5px">Музыка</div>
<svg class="abs fold" style="left:1266px;top:684px" viewBox="0 0 53 54"><use href="#folder"/><circle cx="32" cy="25.5" r="3.5" stroke="#1a8cf0" stroke-width="2" fill="none"/><circle cx="17.5" cy="33.5" r="3.5" stroke="#1a8cf0" stroke-width="2" fill="none"/><circle cx="32" cy="41.5" r="3.5" stroke="#1a8cf0" stroke-width="2" fill="none"/><path d="M20.5 31.8 L29 27.2 M20.5 35.2 L29 39.8" stroke="#1a8cf0" stroke-width="2"/></svg>
<div class="abs lbl" style="left:1242.5px;top:748.5px">Общедоступные</div>
<svg class="abs fold" style="left:760px;top:778px" viewBox="0 0 53 54"><use href="#folder"/><path d="M12 24 L12 28 M12 38 L12 42 L16 42 M37 42 L41 42 L41 38 M41 28 L41 24 L37 24 M16 24 L12 24" stroke="#1a8cf0" stroke-width="2" fill="none"/><path d="M21 26.5 L28.5 26.5 L33 31 L33 39.5 L21 39.5Z" stroke="#1a8cf0" stroke-width="2" fill="none"/></svg>
<div class="abs lbl" style="left:736.5px;top:842.5px">Рабочий стол</div>
<svg class="abs fold" style="left:861px;top:778px" viewBox="0 0 53 54"><use href="#folder"/><path d="M20.5 23.5 L29.5 23.5 L36 30 L36 42.5 L20.5 42.5Z" stroke="#1a8cf0" stroke-width="2" fill="none" stroke-dasharray="2.5 2"/><path d="M29 23.5 L29 30.5 L36 30.5" fill="#1a8cf0"/></svg>
<div class="abs lbl" style="left:837.5px;top:842.5px">Шаблоны</div>
<div class="abs" style="left:1115px;top:1039px;width:240px;height:20px;background:#fff;border:1px solid #e4e4e4;border-right:none;border-bottom:none;border-radius:6px 0 6px 0"></div>
<div class="abs" style="left:1126px;top:1043px;font-size:9.6px;line-height:12px;color:#333;white-space:nowrap">Выделен объект «Загрузки»&nbsp; (внутри 0 объектов)</div>

<!-- FM overlay icon -->
<div class="abs" style="left:937px;top:1018px;width:44px;height:56px;border-radius:5px;box-shadow:0 0 3px 1px rgba(0,0,0,.25)"></div>
<svg class="abs" style="left:937px;top:1018px" width="44" height="56" viewBox="0 0 44 56">
  <rect x="0" y="0" width="44" height="56" rx="5" fill="#fdfdfd"/>
  <rect x="2" y="2" width="40" height="50" rx="2" fill="#0a86e8"/>
  <rect x="2" y="50.5" width="40" height="1.5" fill="#0b6a8c"/>
  <rect x="16" y="8" width="12" height="4" rx="1" fill="#ece8e2"/><rect x="16" y="10.5" width="12" height="1.5" fill="#b9c0c6"/>
  <rect x="16" y="24" width="12" height="4" rx="1" fill="#ece8e2"/><rect x="16" y="26.5" width="12" height="1.5" fill="#b9c0c6"/>
  <rect x="16" y="40" width="12" height="4" rx="1" fill="#ece8e2"/><rect x="16" y="42.5" width="12" height="1.5" fill="#b9c0c6"/>
  <path d="M14 18.5 L30 18.5 M5 34.5 L40 34.5" stroke="#0a5a88" stroke-width="0.8" stroke-dasharray="0.8 3.2"/>
</svg>

<!-- dock -->
<div id="dock" class="abs"></div>
<!-- firefox -->
<svg class="abs" style="left:673px;top:1104px" width="62" height="62" viewBox="0 0 62 62">
  <defs>
    <linearGradient id="ffo" x1="0.8" y1="0.1" x2="0.25" y2="0.85">
      <stop offset="0" stop-color="#ffe226"/>
      <stop offset="0.4" stop-color="#ffc21a"/>
      <stop offset="0.62" stop-color="#ff9410"/>
      <stop offset="0.8" stop-color="#ff4f3c"/>
      <stop offset="1" stop-color="#ff3b4a"/>
    </linearGradient>
  </defs>
  <path d="M30 60 C14 60 1.7 48 1.7 33 C1.7 24 5 17 12.5 11 L14 19 C16 16 18 15 20.3 13.5 L21 21 C24 18 27 16.5 30 16 C31 9 34 4.5 38.5 1.8 C42 8 47 12 51 17 L50.5 13 C56 19 58.5 26 58.5 33 C58.5 48 46 60 30 60Z" fill="url(#ffo)"/>
  <path d="M2 36 C4 50 16 60 30 60 C42 60 52 53 56 43 C48 50 38 52 30 50 C18 48 8 44 2 36Z" fill="#ff3b48"/>
  <ellipse cx="30.5" cy="33" rx="12" ry="13" fill="#9a3fd2"/>
  <path d="M19 30 C22 27 30 25 35 29 C36 24 33 22 30 20.5 C25 20 20 24 19 30Z" fill="#ff9d00"/>
  <path d="M38 24 C41 22 44 23 46 26 C44 25 41 26 39 27Z" fill="#ffc21a"/>
  <ellipse cx="27" cy="38" rx="7" ry="6" fill="#5d47c9" opacity=".8"/>
</svg>
<!-- evolution -->
<svg class="abs" style="left:762px;top:1104px" width="58" height="62" viewBox="0 0 58 62">
  <path d="M1 22 L24 4 Q25 2.5 27 4 L49 22 L49 58 L1 58Z" fill="#b8b8b8"/>
  <rect x="5" y="7" width="40" height="38" fill="#ececec"/>
  <path d="M1 22 L25 42 L49 22 L49 58 L1 58Z" fill="#dedede"/>
  <path d="M1 58 L25 38 L49 58Z" fill="#e9e9e6"/>
  <circle cx="40" cy="47" r="14" fill="#9b2fc2"/>
  <circle cx="40" cy="47" r="11.5" fill="#f4f4f4"/>
  <path d="M34 41 L40 47" stroke="#222" stroke-width="1.7" fill="none"/><path d="M40 47 L46 40" stroke="#9a9a9a" stroke-width="1" fill="none"/>
  <path d="M40 47 L38 54" stroke="#e22" stroke-width="0.8"/>
</svg>
<!-- shotwell -->
<svg class="abs" style="left:838px;top:1105px" width="64" height="62" viewBox="0 0 64 62">
  <g transform="translate(22 20) rotate(-16)">
    <rect x="0" y="0" width="31" height="37" fill="#e9e9e6"/>
    <rect x="2" y="2" width="27" height="24" fill="#e68a92"/>
    <path d="M2 16 L6 13 L9 15 L12 11 L16 14 L20 9 L24 12 L29 10 L29 26 L2 26Z" fill="#86161c"/>
    <rect x="0" y="33" width="31" height="4" fill="#cfcfcb"/>
  </g>
  <g transform="translate(3 4.6) rotate(-3.5)">
    <rect x="0" y="0" width="32" height="38" fill="#ececea"/>
    <rect x="2" y="2" width="28" height="25" fill="#4a9ccc"/>
    <rect x="2" y="2" width="28" height="9" fill="#2f74ad"/>
    <ellipse cx="13" cy="23" rx="8" ry="4.5" fill="#e2f3fb"/>
    <path d="M20 25 L20 16 M20 18 L15 11 M20 17 L25 10 M17.5 14 L14 13.5 M22.5 13.5 L26 14" stroke="#1c1c1c" stroke-width="1.1" fill="none"/>
    <rect x="2" y="24.5" width="28" height="2.5" fill="#111"/>
    <rect x="0" y="34" width="32" height="4" fill="#d4d4d0"/>
  </g>
</svg>
<!-- files -->
<svg class="abs" style="left:933px;top:1108px" width="44" height="56" viewBox="0 0 44 56">
  <rect x="0" y="0" width="44" height="56" rx="5" fill="#f6f6f4"/>
  <rect x="2" y="2" width="40" height="49" rx="2" fill="#0a86e8"/>
  <rect x="2" y="49.5" width="40" height="1.5" fill="#0b6a8c"/>
  <rect x="16" y="8.5" width="12" height="4" rx="1" fill="#ece8e2"/><rect x="16" y="11" width="12" height="1.5" fill="#b9c0c6"/>
  <rect x="16" y="24" width="12" height="4" rx="1" fill="#ece8e2"/><rect x="16" y="26.5" width="12" height="1.5" fill="#b9c0c6"/>
  <rect x="16" y="40" width="12" height="4" rx="1" fill="#ece8e2"/><rect x="16" y="42.5" width="12" height="1.5" fill="#b9c0c6"/>
  <path d="M14 18.5 L30 18.5 M5 34 L40 34" stroke="#0a5a88" stroke-width="0.8" stroke-dasharray="0.8 3.2"/>
</svg>
<div class="abs" style="left:951.5px;top:1168.5px;width:6px;height:6px;border-radius:50%;background:#f0f0f0"></div>
<!-- software -->
<svg class="abs" style="left:1010px;top:1107px" width="58" height="56" viewBox="0 0 58 56">
  <path d="M20 12 L20 4 Q20 2 22 2 L36 2 Q38 2 38 4 L38 12" stroke="#d9d9d6" stroke-width="3" fill="none"/>
  <path d="M1 11 L57 11 L57 52 Q57 55 54 55 L4 55 Q1 55 1 52Z" fill="#f3f3f0"/>
  <rect x="1" y="11" width="56" height="20" fill="#e3e3df"/>
  <path d="M1 50.5 L57 50.5 L57 52 Q57 55 54 55 L4 55 Q1 55 1 52Z" fill="#dcdcd7"/>
  <circle cx="35" cy="22.5" r="6" fill="#8440d6"/>
  <rect x="15" y="25" width="12" height="12" rx="4" fill="#f2553f"/>
  <path d="M40.6 31.8 L40.6 45.6 L28.6 38.7Z" fill="#1b8ad8"/>
</svg>
<div class="abs" style="left:1085px;top:1104px;width:1px;height:64px;background:#484848"></div>
<!-- terminal -->
<svg class="abs" style="left:1105px;top:1109px" width="54" height="54" viewBox="0 0 54 54">
  <rect x="1" y="1" width="52" height="52" rx="4.5" fill="#9fa19f"/>
  <rect x="1" y="1" width="52" height="48" rx="4.5" fill="#f3f3ef"/>
  <rect x="3" y="3" width="48" height="44" rx="2.5" fill="#231d33"/>
  <path d="M9 10 L16 14.5 L9 19" stroke="#fff" stroke-width="1.9" fill="none"/>
  <path d="M18 22 L26 22" stroke="#fff" stroke-width="1.9"/>
</svg>
<div class="abs" style="left:1128.5px;top:1168.5px;width:6px;height:6px;border-radius:50%;background:#f0f0f0"></div>
<!-- app grid -->
<svg class="abs" style="left:1194px;top:1114px" width="44" height="44" viewBox="0 0 44 44">
  <g fill="#fafafa">
  <circle cx="6" cy="6" r="4.3"/><circle cx="22" cy="6" r="4.3"/><circle cx="38" cy="6" r="4.3"/>
  <circle cx="6" cy="22" r="4.3"/><circle cx="22" cy="22" r="4.3"/><circle cx="38" cy="22" r="4.3"/>
  <circle cx="6" cy="38" r="4.3"/><circle cx="22" cy="38" r="4.3"/><circle cx="38" cy="38" r="4.3"/>
  </g>
</svg>

</body></html>
